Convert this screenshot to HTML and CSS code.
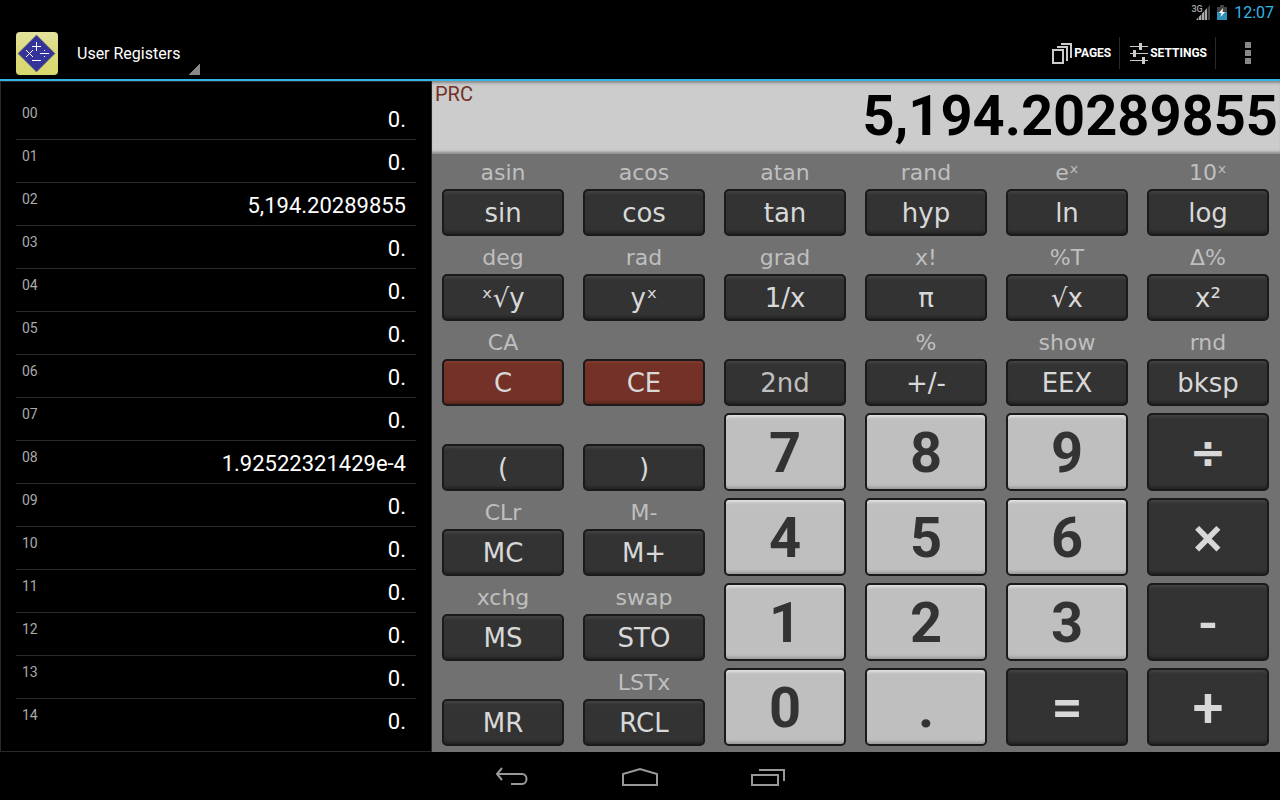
FILE: index.html
```html
<!DOCTYPE html>
<html lang="en">
<head>
  <meta charset="UTF-8">
  <meta name="viewport" content="width=device-width,initial-scale=1">
  <title>Calculator - User Registers</title>
  <link rel="stylesheet" href="styles.css">
</head>
<body>
  <div class="status-bar">
    <svg class="signal" width="18" height="17" viewBox="0 0 18 17" aria-hidden="true">
      <path fill="#444" d="M18 1v15H4z"/>
      <path fill="#aaa" d="M15 4.200v11.800H4z"/>
      <path stroke="#000" stroke-opacity=".6" d="M6.500 10v6M9.500 8v8M12.500 5v11M15.500 2v14"/>
      <text x="5" y="8">3G</text>
    </svg>
    <svg width="10" height="15" viewBox="0 0 10 15" aria-hidden="true">
      <path fill="#444" d="M3 0h4v2h3v6H0V2h3z"/>
      <path fill="#2d91b8" d="M0 7h10v8H0z"/>
      <path fill="#fff" d="M6 3L2 8h2.500L3.500 12 8 7H5.500z"/>
    </svg>
    <time>12:07</time>
  </div>

  <header class="action-bar">
    <svg class="logo" width="42" height="43" viewBox="0 0 42 43" aria-hidden="true">
      <defs>
        <linearGradient id="gold" x2="0" y2="1">
          <stop offset="0" stop-color="#e4e29e"/>
          <stop offset=".5" stop-color="#dcda78"/>
          <stop offset="1" stop-color="#d8d870"/>
        </linearGradient>
      </defs>
      <rect width="42" height="43" rx="4" fill="url(#gold)"/>
      <path fill="#333399" stroke="#77775e" stroke-opacity=".5" d="M20.500 3L39 21.500 20.500 40 2 21.500z"/>
      <path stroke="#fff" fill="none" d="M20.500 10v9M16 14.500h9M10 18l7 7M17 18l-7 7M24 21.500h9M16 28.500h9"/>
      <path fill="#fff" d="M28 18h1v1h-1zM28 24h1v1h-1z"/>
    </svg>
    <button class="spinner" type="button">User Registers</button>
    <div class="actions">
      <button class="action" type="button">
        <svg width="20" height="21" viewBox="0 0 20 21" fill="none" stroke="#ccc" stroke-width="2" aria-hidden="true">
          <path d="M1 7h10v13H1zM5 4h10v14M9 1h10v14"/>
        </svg>
        PAGES
      </button>
      <button class="action" type="button">
        <svg width="18" height="21" viewBox="0 0 18 21" aria-hidden="true">
          <path stroke="#ccc" d="M0 3.500h18M0 10.500h18M0 17.500h18"/>
          <path stroke="#ccc" stroke-width="3" d="M10.500 0v7M4.500 7v7M13.500 14v7"/>
        </svg>
        SETTINGS
      </button>
      <button class="overflow" type="button" aria-label="More options">
        <svg width="6" height="22" viewBox="0 0 6 22" fill="#888" aria-hidden="true">
          <path d="M0 0h6v6H0zM0 8h6v6H0zM0 16h6v6H0z"/>
        </svg>
      </button>
    </div>
  </header>

  <main>
    <section class="registers">
      <table>
        <tbody>
          <tr><th scope="row">00</th><td>0.</td></tr>
          <tr><th scope="row">01</th><td>0.</td></tr>
          <tr><th scope="row">02</th><td>5,194.20289855</td></tr>
          <tr><th scope="row">03</th><td>0.</td></tr>
          <tr><th scope="row">04</th><td>0.</td></tr>
          <tr><th scope="row">05</th><td>0.</td></tr>
          <tr><th scope="row">06</th><td>0.</td></tr>
          <tr><th scope="row">07</th><td>0.</td></tr>
          <tr><th scope="row">08</th><td>1.92522321429e-4</td></tr>
          <tr><th scope="row">09</th><td>0.</td></tr>
          <tr><th scope="row">10</th><td>0.</td></tr>
          <tr><th scope="row">11</th><td>0.</td></tr>
          <tr><th scope="row">12</th><td>0.</td></tr>
          <tr><th scope="row">13</th><td>0.</td></tr>
          <tr><th scope="row">14</th><td>0.</td></tr>
        </tbody>
      </table>
    </section>

    <section class="calculator">
      <div class="display">
        <span class="mode">PRC</span>
        <output>5,194.20289855</output>
      </div>

      <div class="keypad">
        <div class="cell"><span>asin</span><button class="key" type="button">sin</button></div>
        <div class="cell"><span>acos</span><button class="key" type="button">cos</button></div>
        <div class="cell"><span>atan</span><button class="key" type="button">tan</button></div>
        <div class="cell"><span>rand</span><button class="key" type="button">hyp</button></div>
        <div class="cell"><span>eˣ</span><button class="key" type="button">ln</button></div>
        <div class="cell"><span>10ˣ</span><button class="key" type="button">log</button></div>

        <div class="cell"><span>deg</span><button class="key" type="button">ˣ√y</button></div>
        <div class="cell"><span>rad</span><button class="key" type="button">yˣ</button></div>
        <div class="cell"><span>grad</span><button class="key" type="button">1/x</button></div>
        <div class="cell"><span>x!</span><button class="key" type="button">π</button></div>
        <div class="cell"><span>%T</span><button class="key" type="button">√x</button></div>
        <div class="cell"><span>Δ%</span><button class="key" type="button">x²</button></div>

        <div class="cell"><span>CA</span><button class="key clear" type="button">C</button></div>
        <div class="cell"><span></span><button class="key clear" type="button">CE</button></div>
        <div class="cell"><span></span><button class="key shift" type="button">2nd</button></div>
        <div class="cell"><span>%</span><button class="key" type="button">+/-</button></div>
        <div class="cell"><span>show</span><button class="key" type="button">EEX</button></div>
        <div class="cell"><span>rnd</span><button class="key" type="button">bksp</button></div>

        <div class="cell"><span></span><button class="key" type="button">(</button></div>
        <div class="cell"><span></span><button class="key" type="button">)</button></div>
        <button class="key big digit" type="button">7</button>
        <button class="key big digit" type="button">8</button>
        <button class="key big digit" type="button">9</button>
        <button class="key big operator divide" type="button">÷</button>

        <div class="cell"><span>CLr</span><button class="key" type="button">MC</button></div>
        <div class="cell"><span>M-</span><button class="key" type="button">M+</button></div>
        <button class="key big digit" type="button">4</button>
        <button class="key big digit" type="button">5</button>
        <button class="key big digit" type="button">6</button>
        <button class="key big operator" type="button">×</button>

        <div class="cell"><span>xchg</span><button class="key" type="button">MS</button></div>
        <div class="cell"><span>swap</span><button class="key" type="button">STO</button></div>
        <button class="key big digit" type="button">1</button>
        <button class="key big digit" type="button">2</button>
        <button class="key big digit" type="button">3</button>
        <button class="key big operator" type="button">-</button>

        <div class="cell"><span></span><button class="key" type="button">MR</button></div>
        <div class="cell"><span>LSTx</span><button class="key" type="button">RCL</button></div>
        <button class="key big digit" type="button">0</button>
        <button class="key big digit" type="button">.</button>
        <button class="key big operator" type="button">=</button>
        <button class="key big operator" type="button">+</button>
      </div>
    </section>
  </main>

  <nav class="nav-bar">
    <button type="button" aria-label="Back">
      <svg width="34" height="20" viewBox="0 0 34 20" fill="none" stroke="#999" stroke-width="2" aria-hidden="true">
        <path d="M7 1L2 7l5 6M2 7h25c6 0 6 10 0 10H16"/>
      </svg>
    </button>
    <button type="button" aria-label="Home">
      <svg width="36" height="20" viewBox="0 0 36 20" fill="none" stroke="#999" stroke-width="2" aria-hidden="true">
        <path d="M1 18V7l17-5 17 5v11z"/>
      </svg>
    </button>
    <button type="button" aria-label="Recent apps">
      <svg width="34" height="20" viewBox="0 0 34 20" fill="none" stroke="#999" stroke-width="2" aria-hidden="true">
        <path d="M1 8h26v10H1zM8 3h25v11"/>
      </svg>
    </button>
  </nav>
</body>
</html>
```

FILE: styles.css
```css
:root {
  --accent: #33b5e5;
  --key: #333;
  --key-edge: #1a1a1a;
  --key-text: #d8d8d8;
  --digit: #bfbfbf;
  --clear: #733127;
  --pad: #717171;
  --lcd: #ccc;
  --line: #2a2a2a;
}
*, *::before, *::after { box-sizing: border-box; }
body {
  margin: 0;
  min-height: 100vh;
  display: flex;
  flex-direction: column;
  background: #000;
  color: #fff;
  font-family: Roboto, sans-serif;
}
button {
  margin: 0;
  padding: 0;
  border: none;
  background: none;
  color: inherit;
  font: inherit;
}
svg { display: block; }

/* status bar */
.status-bar {
  flex: none;
  height: 25px;
  display: flex;
  align-items: center;
  justify-content: flex-end;
  gap: 7px;
  padding: 0 6px;
  color: var(--accent);
  font-size: 16px;
}
.signal { overflow: visible; }
.signal text {
  fill: #aaa;
  font-size: 9px;
  font-weight: 500;
  text-anchor: middle;
}

/* action bar */
.action-bar {
  flex: none;
  height: 56px;
  display: flex;
  align-items: center;
  padding: 2px 8px 0 16px;
  border-bottom: 2px solid var(--accent);
}
.spinner {
  align-self: stretch;
  margin: 0 0 4px 11px;
  padding: 4px 20px 0 8px;
  font-size: 16px;
  background: linear-gradient(135deg, transparent 50%, #888 50%) right bottom / 12px 12px no-repeat;
}
.actions {
  display: flex;
  align-items: center;
  margin-left: auto;
}
.action {
  display: flex;
  align-items: center;
  gap: 2px;
  height: 32px;
  padding: 0 8px;
  border-right: 1px solid var(--line);
  font-size: 12px;
  font-weight: 700;
}
.action + .action { padding-left: 10px; }
.overflow { padding: 5px 21px 5px 29px; }

main {
  flex: 1;
  display: flex;
}

/* registers */
.registers {
  width: 33.75%;
  padding: 15px 15px 8px;
  border: 1px solid var(--line);
}
.registers table {
  width: 100%;
  border-spacing: 0;
}
.registers th,
.registers td {
  height: 43px;
  padding: 0;
  border-bottom: 1px solid var(--line);
}
.registers th {
  padding: 8px 6px;
  color: #aaa;
  font-size: 14px;
  line-height: 16px;
  font-weight: 400;
  text-align: left;
  vertical-align: top;
}
.registers td {
  padding: 2px 10px 0;
  font-size: 22px;
  text-align: right;
}
.registers tr:last-child > * { border-bottom: none; }

/* calculator */
.calculator {
  flex: 1;
  display: flex;
  flex-direction: column;
  background: var(--pad);
}
.display {
  height: 73px;
  display: flex;
  justify-content: space-between;
  padding: 0 2px 0 3px;
  background: var(--lcd);
  box-shadow: inset 0 4px 3px -2px #888, inset 0 -4px 3px -2px #888;
  color: #000;
}
.mode {
  padding-top: 1px;
  color: var(--clear);
  font-size: 20px;
}
.display output {
  font-size: 56px;
  line-height: 70px;
  font-weight: 700;
}
.keypad {
  flex: 1;
  display: grid;
  grid-template-columns: repeat(6, 1fr);
  grid-auto-rows: 1fr;
  gap: 7px 19px;
  padding: 4px 11px 6px 10px;
  font-family: "DejaVu Sans", sans-serif;
}
.cell {
  display: flex;
  flex-direction: column;
}
.cell span {
  height: 31px;
  color: #bfbfbf;
  font-size: 22px;
  line-height: 30px;
  text-align: center;
}
.key {
  flex: 1;
  border: 2px solid var(--key-edge);
  border-radius: 5px;
  background: var(--key);
  box-shadow: inset 0 3px 3px -1px #444, inset 0 -3px 3px -1px #222;
  color: var(--key-text);
  font-size: 26px;
  line-height: 30px;
}
.clear {
  background: var(--clear);
  box-shadow: inset 0 3px 3px -1px #843c30, inset 0 -3px 3px -1px #5c261e;
}
.shift { color: #bfbfbf; }
.big {
  padding-top: 2px;
  font-family: Roboto, sans-serif;
  font-size: 56px;
  font-weight: 700;
  line-height: 60px;
}
.digit {
  background: var(--digit);
  box-shadow: inset 0 3px 3px -1px #e4e4e4, inset 0 -3px 3px -1px #999;
  color: var(--key);
}
.operator { font-weight: 500; }
/* square dots on the division sign */
.divide {
  font-family: "DejaVu Sans", sans-serif;
  font-size: 44px;
  font-weight: 700;
}

/* navigation bar */
.nav-bar {
  flex: none;
  height: 48px;
  display: flex;
  align-items: center;
  justify-content: center;
  padding-top: 2px;
}
.nav-bar button {
  width: 128px;
  display: flex;
  justify-content: center;
}
```
